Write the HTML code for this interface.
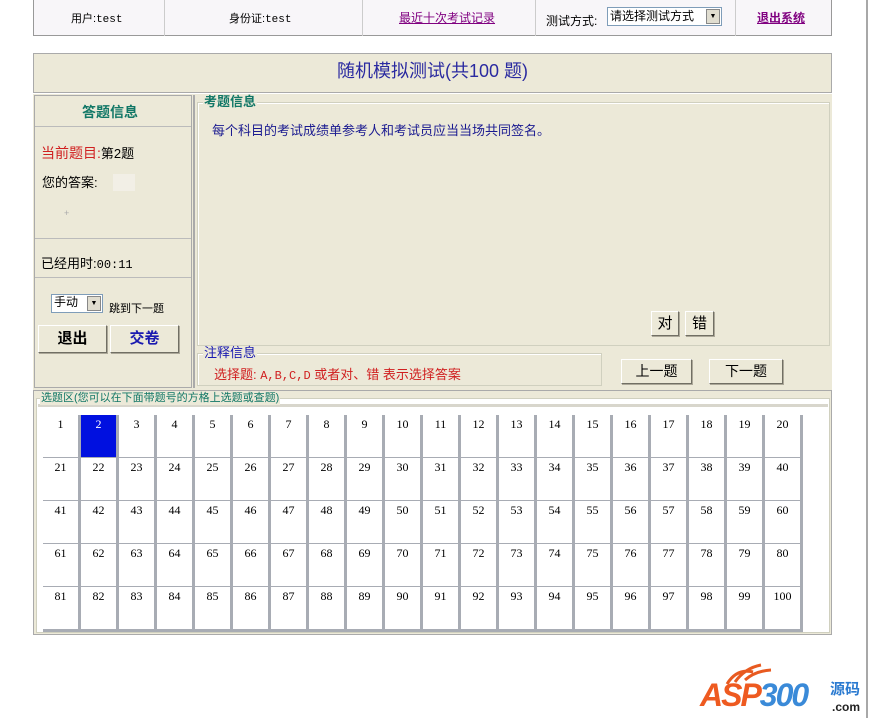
<!DOCTYPE html>
<html><head><meta charset="utf-8"><style>
body{margin:0;width:871px;height:718px;background:#fff;position:relative;overflow:hidden;font-family:"Liberation Sans","Noto Sans CJK SC",sans-serif;font-size:12px;color:#000}
.a{position:absolute}
.bg{background:#ece9d8}
.btn{position:absolute;background:#ece9d8;border:1px solid;border-color:#fff #716f64 #716f64 #fff;box-shadow:1px 1px 0 #aca899;text-align:center;box-sizing:border-box}
.fs{position:absolute;border:1px solid #d0d0bf;box-shadow:inset 1px 1px 0 #fff;box-sizing:border-box}
.lg{position:absolute;background:#ece9d8;padding:0 1px;line-height:14px}
.cell{position:absolute;width:35px;height:40px;background:#fff;border-right:3px solid #a8acb4;border-bottom:3px solid #a8acb4;text-align:center;font-family:"Liberation Serif","Noto Sans CJK SC",serif;font-size:12px;line-height:14px;padding-top:2px;box-sizing:content-box}
</style></head><body>
<div class="a" style="left:866px;top:0;width:2px;height:718px;background:#a8a8a8"></div>
<div class="a" style="left:33px;top:0;width:799px;height:36px;background:#f8f6f9;border:1px solid #999;border-top:none;box-sizing:border-box"></div>
<div class="a" style="left:164px;top:0;width:1px;height:36px;background:#ccc"></div>
<div class="a" style="left:362px;top:0;width:1px;height:36px;background:#ccc"></div>
<div class="a" style="left:535px;top:0;width:1px;height:36px;background:#ccc"></div>
<div class="a" style="left:735px;top:0;width:1px;height:36px;background:#ccc"></div>
<div class="a" style="left:71px;top:10px;font-size:11px">用户:<span style="font-family:'Liberation Mono',monospace">test</span></div>
<div class="a" style="left:229px;top:10px;font-size:11px">身份证:<span style="font-family:'Liberation Mono',monospace">test</span></div>
<div class="a" style="left:399px;top:9px;color:#800080;text-decoration:underline">最近十次考试记录</div>
<div class="a" style="left:546px;top:12px;font-size:12px">测试方式:</div>
<div class="a" style="left:607px;top:7px;width:115px;height:19px;border:1px solid #7f9db9;background:#fff;box-sizing:border-box;font-size:12px;line-height:16px;padding-left:2px">请选择测试方式<span style="position:absolute;right:1px;top:1px;width:14px;height:15px;background:#e0ddd0;border:1px solid #888;box-sizing:border-box;font-size:7px;line-height:13px;text-align:center">▼</span></div>
<div class="a" style="left:757px;top:9px;color:#800080;font-weight:bold;text-decoration:underline">退出系统</div>
<div class="a bg" style="left:33px;top:53px;width:799px;height:40px;border:1px solid #aaa;box-sizing:border-box;text-align:center;font-size:18px;line-height:34px;color:#2a2aa0">随机模拟测试(共100 题)</div>
<div class="a bg" style="left:33px;top:94px;width:799px;height:296px"></div>
<div class="a" style="left:34px;top:95px;width:158px;height:293px;border:1px solid #aaa;box-sizing:border-box"></div>
<div class="a" style="left:35px;top:126px;width:156px;height:1px;background:#bbb"></div>
<div class="a" style="left:35px;top:238px;width:156px;height:1px;background:#bbb"></div>
<div class="a" style="left:35px;top:277px;width:156px;height:1px;background:#bbb"></div>
<div class="a" style="left:82px;top:102px;color:#117766;font-weight:bold;font-size:14px">答题信息</div>
<div class="a" style="left:41px;top:143px;color:#d02020;font-size:14px">当前题目:<span style="color:#000;font-size:13px">第2题</span></div>
<div class="a" style="left:42px;top:172px;font-size:13px">您的答案:</div>
<div class="a" style="left:113px;top:174px;width:22px;height:17px;background:#f2efe6"></div>
<div class="a" style="left:64px;top:208px;color:#aaa;font-size:9px">+</div>
<div class="a" style="left:41px;top:253px;font-size:13px">已经用时:<span style="font-size:12px;font-family:'Liberation Mono',monospace">00:11</span></div>
<div class="a" style="left:51px;top:294px;width:52px;height:19px;border:1px solid #7f9db9;background:#fff;box-sizing:border-box;font-size:12px;line-height:15px;padding-left:2px">手动<span style="position:absolute;right:1px;top:1px;width:14px;height:15px;background:#e0ddd0;border:1px solid #888;box-sizing:border-box;font-size:7px;line-height:13px;text-align:center">▼</span></div>
<div class="a" style="left:109px;top:300px;font-size:11px">跳到下一题</div>
<div class="btn" style="left:38px;top:325px;width:69px;height:28px;font-weight:bold;font-size:15px;line-height:26px">退出</div>
<div class="btn" style="left:110px;top:325px;width:69px;height:28px;font-weight:bold;font-size:15px;line-height:26px;color:#1a1ab0">交卷</div>
<div class="a" style="left:193px;top:95px;width:2px;height:293px;background:#aaa"></div>
<div class="fs" style="left:197px;top:102px;width:633px;height:244px"></div>
<div class="lg" style="left:203px;top:95px;color:#117766;font-weight:bold;font-size:13px">考题信息</div>
<div class="a" style="left:212px;top:120px;color:#1a1a90;font-size:13px">每个科目的考试成绩单参考人和考试员应当当场共同签名。</div>
<div class="btn" style="left:651px;top:311px;width:28px;height:25px;font-size:15px;line-height:23px">对</div>
<div class="btn" style="left:685px;top:311px;width:29px;height:25px;font-size:15px;line-height:23px">错</div>
<div class="fs" style="left:197px;top:353px;width:405px;height:33px"></div>
<div class="lg" style="left:203px;top:346px;color:#1a1ab0;font-size:13px">注释信息</div>
<div class="a" style="left:214px;top:364px;color:#d02020;font-size:13px">选择题: <span style="font-family:'Liberation Mono',monospace;font-size:12px">A,B,C,D</span> 或者对、错 表示选择答案</div>
<div class="btn" style="left:621px;top:359px;width:71px;height:25px;font-size:14px;line-height:23px">上一题</div>
<div class="btn" style="left:709px;top:359px;width:74px;height:25px;font-size:14px;line-height:23px">下一题</div>
<div class="a bg" style="left:33px;top:390px;width:799px;height:245px;border:1px solid #aaa;box-sizing:border-box"></div>
<div class="fs" style="left:36px;top:398px;width:794px;height:235px;background:#fff"></div>
<div class="a" style="left:38px;top:404px;width:790px;height:3px;background:#d8d6cc"></div>
<div class="lg" style="left:40px;top:391px;color:#117766;font-size:11px">选题区(您可以在下面带题号的方格上选题或查题)</div>
<div id="g"></div>
<script>
var h='';for(var r=0;r<5;r++)for(var c=0;c<20;c++){var n=r*20+c+1;h+='<div class="cell" style="left:'+(43+c*38)+'px;top:'+(415+r*43)+'px;'+(n==2?'background:#0010e0;color:#fff;':'')+'">'+n+'</div>';}
document.getElementById('g').innerHTML=h;
</script>
<div class="a" style="left:700px;top:678px;font-size:32px;font-weight:bold;font-style:italic;letter-spacing:-2px;line-height:34px"><span style="color:#ee5a20">ASP</span><span style="color:#3a8ad8">300</span></div>
<div class="a" style="left:830px;top:682px;color:#2a7ad0;font-weight:bold;font-size:15px;line-height:16px">源码</div>
<div class="a" style="left:832px;top:700px;color:#222;font-weight:bold;font-size:12px">.com</div>
<svg class="a" style="left:725px;top:662px" width="60" height="24"><path d="M2 22 Q12 6 28 10 M10 20 Q20 6 36 3 M20 18 Q30 9 46 8" stroke="#e85a20" stroke-width="3" fill="none"/></svg>
</body></html>
